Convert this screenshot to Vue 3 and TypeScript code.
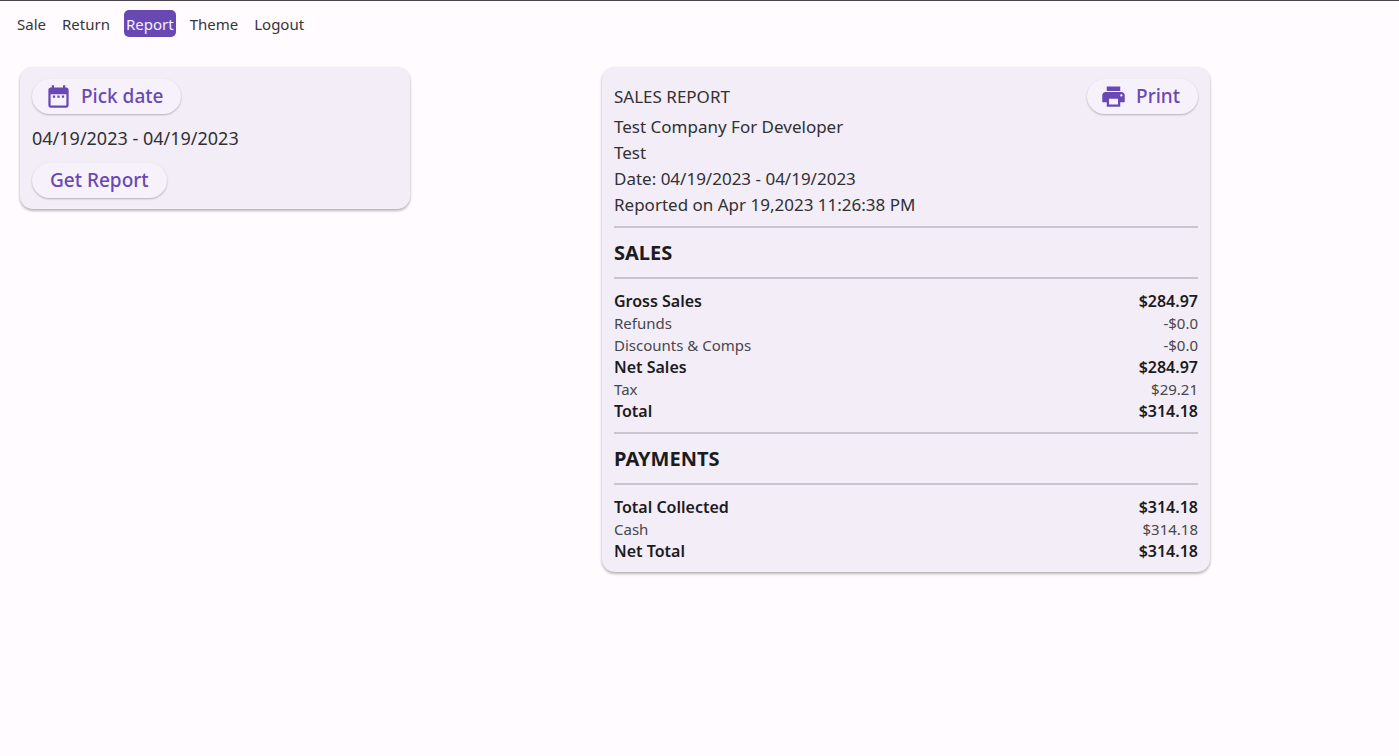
<script setup lang="ts">
import { ref } from 'vue'

interface Line {
  label: string
  amount: string
  strong?: boolean
}

interface Section {
  title: string
  lines: Line[]
}

const pages: string[] = ['Sale', 'Return', 'Report', 'Theme', 'Logout']
const current = ref('Report')
const range = '04/19/2023 - 04/19/2023'

const sections: Section[] = [
  {
    title: 'SALES',
    lines: [
      { label: 'Gross Sales', amount: '$284.97', strong: true },
      { label: 'Refunds', amount: '-$0.0' },
      { label: 'Discounts & Comps', amount: '-$0.0' },
      { label: 'Net Sales', amount: '$284.97', strong: true },
      { label: 'Tax', amount: '$29.21' },
      { label: 'Total', amount: '$314.18', strong: true },
    ],
  },
  {
    title: 'PAYMENTS',
    lines: [
      { label: 'Total Collected', amount: '$314.18', strong: true },
      { label: 'Cash', amount: '$314.18' },
      { label: 'Net Total', amount: '$314.18', strong: true },
    ],
  },
]
</script>

<template>
  <div class="app">
    <nav class="nav">
      <a
        v-for="page in pages"
        :key="page"
        href="#"
        class="nav-link"
        :class="{ active: page === current }"
        @click.prevent="current = page"
      >{{ page }}</a>
    </nav>

    <main class="content">
      <section class="card picker">
        <button type="button" class="pill">
          <svg class="icon" viewBox="0 0 24 24" aria-hidden="true">
            <path d="M7 11h2v2H7v-2zm14-5v14c0 1.1-.9 2-2 2H5c-1.11 0-2-.9-2-2l.01-14c0-1.1.88-2 1.99-2h1V2h2v2h8V2h2v2h1c1.1 0 2 .9 2 2zM5 8h14V6H5v2zm14 12V10H5v10h14zm-4-7h2v-2h-2v2zm-4 0h2v-2h-2v2z" />
            <path d="M4 5h16v4H4z" />
          </svg>
          Pick date
        </button>
        <p class="range">{{ range }}</p>
        <button type="button" class="pill">Get Report</button>
      </section>

      <section class="card report">
        <header class="report-head">
          <h1 class="report-title">SALES REPORT</h1>
          <button type="button" class="pill">
            <svg class="icon" viewBox="0 0 24 24" aria-hidden="true">
              <path d="M19 8H5c-1.66 0-3 1.34-3 3v6h4v4h12v-4h4v-6c0-1.66-1.34-3-3-3zm-3 11H8v-5h8v5zm3-7c-.55 0-1-.45-1-1s.45-1 1-1 1 .45 1 1-.45 1-1 1zm-1-9H6v4h12V3z" />
            </svg>
            Print
          </button>
        </header>
        <div class="meta">
          <p>Test Company For Developer</p>
          <p>Test</p>
          <p>Date: {{ range }}</p>
          <p>Reported on Apr 19,2023 11:26:38 PM</p>
        </div>

        <template v-for="section in sections" :key="section.title">
          <h2 class="section-title">{{ section.title }}</h2>
          <table class="lines">
            <tbody>
              <tr v-for="line in section.lines" :key="line.label" :class="{ strong: line.strong }">
                <th scope="row">{{ line.label }}</th>
                <td>{{ line.amount }}</td>
              </tr>
            </tbody>
          </table>
        </template>
      </section>
    </main>
  </div>
</template>

<style>
body {
  background: #fffbff;
}
</style>

<style scoped>
.app {
  box-sizing: border-box;
  min-height: 100vh;
  border-top: 1px solid #48454e;
  background: #fffbff;
  color: #313033;
  font-family: "Segoe UI", "Noto Sans", "Open Sans", sans-serif;
  font-size: 17px;
  line-height: 26px;
}

p,
h1,
h2 {
  margin: 0;
}

.nav {
  display: flex;
  gap: 12px;
  padding: 9px 15px 30px;
}

.nav-link {
  padding: 1px 2px 0;
  border-radius: 5px;
  color: #37353a;
  font-size: 15px;
  line-height: 26px;
  text-decoration: none;
}

.nav-link.active {
  background: #6849b4;
  color: #f6f0ff;
}

.content {
  display: grid;
  grid-template-columns: 390fr 192fr 608fr 189fr;
  align-items: start;
  padding: 0 0 20px 20px;
}

.card {
  padding: 12px 12px 11px;
  border-radius: 13px;
  background: #f2edf7;
  box-shadow: 0 2px 3px rgba(0, 0, 0, 0.22), 0 1px 3px rgba(0, 0, 0, 0.12);
}

.picker {
  display: flex;
  flex-direction: column;
  align-items: flex-start;
  gap: 11px;
}

.report {
  grid-column: 3;
  padding-bottom: 10px;
}

.range {
  font-size: 18px;
  line-height: 27px;
}

.pill {
  display: inline-flex;
  align-items: center;
  gap: 9px;
  height: 35px;
  padding: 0 18px;
  border: 0;
  border-radius: 18px;
  background: #f7f1fc;
  box-shadow: 0 1px 2px rgba(0, 0, 0, 0.26);
  color: #6849b4;
  font-family: inherit;
  font-size: 19px;
  font-weight: 500;
  line-height: 37px;
  cursor: pointer;
}

.icon {
  width: 27px;
  height: 27px;
  margin-left: -5px;
  fill: currentColor;
}

.report-head {
  display: flex;
  align-items: center;
  justify-content: space-between;
}

.report-title {
  font-size: 17px;
  font-weight: 400;
  line-height: 28px;
}

.meta {
  padding-bottom: 8px;
}

.section-title {
  padding: 12px 0 11px;
  border: solid #c9c5d0;
  border-width: 2px 0;
  color: #1c1b1e;
  font-size: 20px;
  font-weight: 700;
}

.lines {
  width: 100%;
  margin: 11px 0 10px;
  border-collapse: collapse;
  color: #48464c;
  font-size: 15px;
  line-height: 22px;
}

.lines:last-child {
  margin-bottom: 0;
}

.lines th,
.lines td {
  padding: 0;
  font-weight: 400;
  text-align: left;
}

.lines td {
  text-align: right;
}

.lines .strong th,
.lines .strong td {
  color: #1c1b1e;
  font-size: 16px;
  font-weight: 600;
}
</style>
